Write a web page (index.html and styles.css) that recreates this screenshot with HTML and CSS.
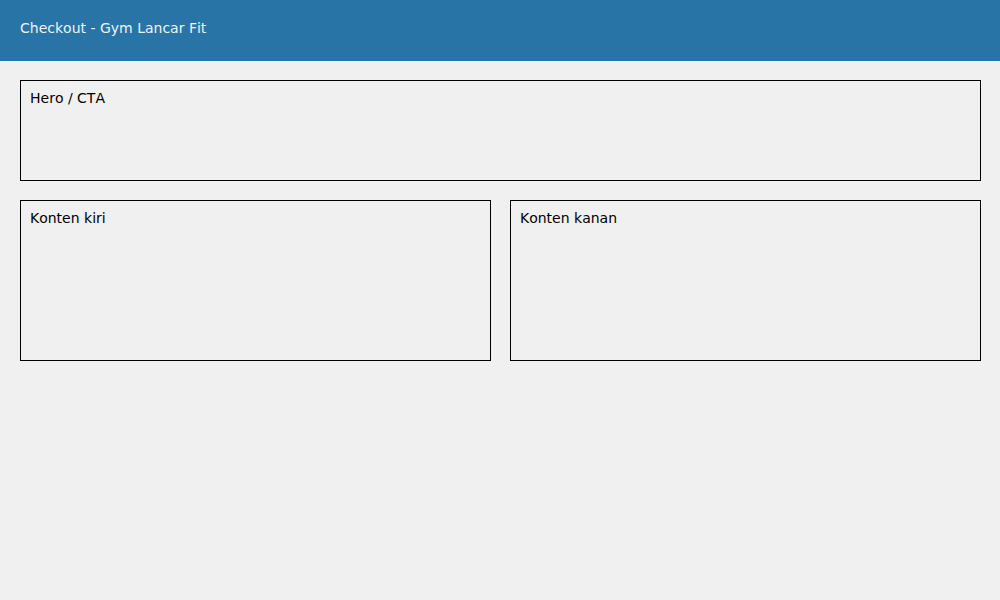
FILE: index.html
```html
<!DOCTYPE html>
<html>
<head>
<meta charset="utf-8">
<title>Checkout - Gym Lancar Fit</title>
<link rel="stylesheet" href="styles.css">
</head>
<body>
<header class="topbar">Checkout - Gym Lancar Fit</header>
<main class="page">
  <section class="box hero">Hero / CTA</section>
  <div class="row">
    <section class="box col">Konten kiri</section>
    <section class="box col">Konten kanan</section>
  </div>
</main>
</body>
</html>
```

FILE: styles.css
```css
* { box-sizing: border-box; }
html, body {
  margin: 0;
  padding: 0;
  background: #f0f0f0;
  font-family: "DejaVu Sans", sans-serif;
  font-size: 14px;
  color: #000;
  font-kerning: none;
}
.topbar {
  height: 61px;
  background: #2874a6;
  color: #eef3f7;
  padding: 20px 20px 0;
  line-height: 16px;
}
.page {
  padding: 19px 19px 0 20px;
}
.box {
  border: 1px solid #000;
  padding: 9px;
  line-height: 16px;
}
.hero {
  width: 961px;
  height: 101px;
}
.row {
  display: grid;
  grid-template-columns: 471px 471px;
  column-gap: 19px;
  margin-top: 19px;
}
.col {
  height: 161px;
}
```
